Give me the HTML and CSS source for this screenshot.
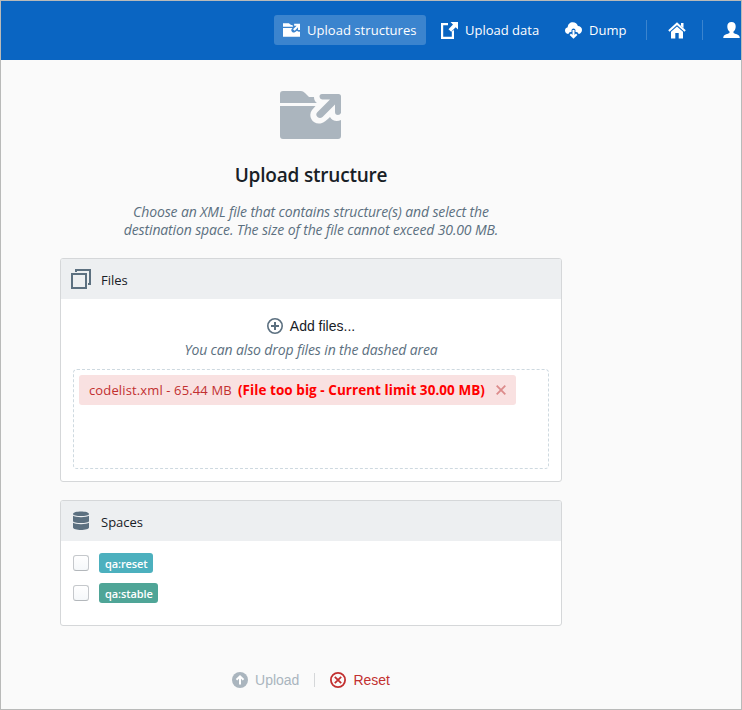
FILE: index.html
```html
<!DOCTYPE html>
<html lang="en">
<head>
<meta charset="utf-8">
<title>Upload structure</title>
<link rel="stylesheet" href="styles.css">
</head>
<body>
<div class="app">
  <header class="navbar">
    <a class="nav-item nav-structures active">
      <svg width="17" height="14" viewBox="0 0 61 48"><path class="fill" d="M0 0H21L29 6H34Q34 10 37 12H0ZM0 17H34L31 20C27 26 34 35 42 32Q45 31 50 27C52 30 57 31 61 29V48H0Z"/><path class="fill" d="M40 2H61V24H54V14L42 27L36 21L49 9H40Z"/></svg>
      <span>Upload structures</span>
    </a>
    <a class="nav-item nav-data">
      <svg width="17" height="17" viewBox="0 0 17 17"><path class="fill" d="M0 1H7V3.200H2.200V14.800H10.800V9.500L13 8V17H0ZM9.500 0H17V7.500L14.700 5.300L10.200 9.800L7.500 7.300L12 2.600Z"/></svg>
      <span>Upload data</span>
    </a>
    <a class="nav-item nav-dump">
      <svg width="17" height="17" viewBox="0 0 17 17"><path class="fill" d="M3.500 12C1.500 12 0 10.500 0 8.500C0 6.700 1.200 5.500 2.700 5.200C2.800 2.200 5 .2 7.800 .2C10.300 .2 12.300 1.700 12.900 4.100C15.300 4.100 17 5.800 17 8C17 10.300 15.300 12 13.500 12C13.300 10.500 12 9.600 10.500 10V8.500C10.500 5.700 6.500 5.700 6.500 8.500V10C5 9.600 3.700 10.500 3.500 12Z"/><path class="stroke" d="M8.500 8V15M5.300 12.200L8.500 15.300L11.700 12.200"/></svg>
      <span>Dump</span>
    </a>
    <i class="nav-divider"></i>
    <a class="nav-icon home">
      <svg width="18" height="17" viewBox="0 0 18 17"><path class="fill" d="M3 9.800L9 4.500L15 9.800V16.500H10.700V11H7.300V16.500H3Z"/><path class="roof" d="M.9 9L9 1.700L17.100 9"/><path class="fill" d="M13 1H15.500V6L13 4Z"/></svg>
    </a>
    <i class="nav-divider"></i>
    <a class="nav-icon user">
      <svg width="17" height="17" viewBox="0 0 17 17"><path class="fill" d="M8.500 0C11.200 0 12.900 1.800 12.700 4.700C12.600 7 11.700 8.600 10.500 9.500V11C12 12 16 12.300 16.500 14.500L16.800 16H.2L.5 14.500C1 12.300 5 12 6.500 11V9.500C5.300 8.600 4.400 7 4.300 4.700C4.100 1.800 5.800 0 8.500 0Z"/></svg>
    </a>
  </header>

  <main class="content">
    <svg class="hero" width="61" height="48" viewBox="0 0 61 48"><path class="fill" d="M3 0H21Q23 0 25 2L29 6H34Q34 10 37 12H0V3Q0 0 3 0ZM0 15H35.500L32 19C27 26 34 35 42 32Q45 31 50 26C52 30 57 31 61 29V45Q61 48 58 48H3Q0 48 0 45Z"/><path class="fill" d="M42 3H58.500Q61 3 61 5.500V22Q60 24 58 24Q55 24 55 21V13.500L42.500 26Q40 28 37.500 26Q35 23.500 37.500 21L50 8.500H42Q39.500 8 39.500 5.700Q39.500 3 42 3Z"/></svg>
    <h1>Upload structure</h1>
    <p class="intro">Choose an XML file that contains structure(s) and select the<br>destination space. The size of the file cannot exceed 30.00 MB.</p>

    <section class="card files">
      <h2 class="card-head">
        <svg width="20" height="20" viewBox="0 0 20 20"><path class="outline" d="M1 5H15V19H1ZM5 3V1H19V15H17"/></svg>
        <span>Files</span>
      </h2>
      <div class="card-body">
        <button class="add">
          <svg width="16" height="16" viewBox="0 0 16 16"><circle cx="8" cy="8" r="7.200"/><path d="M8 4V12M4 8H12"/></svg>
          Add files...
        </button>
        <p class="hint">You can also drop files in the dashed area</p>
        <div class="dropzone">
          <div class="file-tag">
            <span class="file-name">codelist.xml - 65.44 MB</span>
            <strong>(File too big - Current limit 30.00 MB)</strong>
            <svg width="10" height="10" viewBox="0 0 10 10"><path d="M.7 .7L9.300 9.300M9.300 .7L.7 9.300"/></svg>
          </div>
        </div>
      </div>
    </section>

    <section class="card spaces">
      <h2 class="card-head">
        <svg width="20" height="20" viewBox="0 0 20 20"><path class="fill" d="M2 3C2 -.3 18 -.3 18 3C18 5.800 2 5.800 2 3ZM2 4.800C4 6.700 16 6.700 18 4.800V10C18 12.800 2 12.800 2 10ZM2 11.800C4 13.700 16 13.700 18 11.800V16.500C18 19.800 2 19.800 2 16.500Z"/></svg>
        <span>Spaces</span>
      </h2>
      <div class="space-list">
        <label class="space"><i class="checkbox"></i><span class="tag reset-tag">qa:reset</span></label>
        <label class="space"><i class="checkbox"></i><span class="tag stable-tag">qa:stable</span></label>
      </div>
    </section>

    <footer class="actions">
      <button class="upload">
        <svg width="16" height="16" viewBox="0 0 16 16"><circle cx="8" cy="8" r="8"/><path d="M8 12.500V5M4.500 7.800L8 4.300L11.500 7.800"/></svg>
        Upload
      </button>
      <i class="action-divider"></i>
      <button class="reset">
        <svg width="16" height="16" viewBox="0 0 16 16"><circle cx="8" cy="8" r="7.100"/><path d="M4.800 4.800L11.200 11.200M11.200 4.800L4.800 11.200"/></svg>
        Reset
      </button>
    </footer>
  </main>
</div>
</body>
</html>
```
FILE: styles.css
```css
* { box-sizing: border-box; }
body {
  margin: 0;
  font: 13px/18px "Open Sans", "Noto Sans", sans-serif;
  color: #182026;
}
svg { flex: none; display: block; }
h1, h2, p { margin: 0; }
button {
  display: flex;
  align-items: center;
  gap: 7px;
  padding: 0;
  border: 0;
  background: none;
  font: 14px/18px "Liberation Sans", Arial, sans-serif;
}
.app {
  width: 742px;
  height: 710px;
  border: 1px solid #b9bab9;
  background: #fafafa;
  overflow: hidden;
}
.navbar {
  display: flex;
  align-items: center;
  height: 59px;
  padding: 0 0 1px 273px;
  background: #0a65c2;
  color: #fff;
  white-space: nowrap;
}
.nav-item {
  display: flex;
  flex: none;
  align-items: center;
  height: 30px;
  gap: 7px;
  margin-right: 6px;
  padding-left: 9px;
  border-radius: 3px;
}
.active { background: #3b84ce; }
.nav-structures { width: 152px; }
.nav-structures span { letter-spacing: .04px; }
.nav-data { width: 118px; }
.nav-dump { width: 80px; margin-right: 10px; }
.navbar .fill { fill: #fff; }
.navbar path:not(.fill) { fill: none; stroke: #fff; stroke-width: 2; }
.navbar .roof { stroke-width: 1.8; }
.nav-divider { flex: none; width: 1px; height: 20px; background: #3b84ce; }
.nav-icon { flex: none; }
.home { margin: 0 16px 0 21px; }
.user { margin-left: 20px; }
.content {
  width: 502px;
  margin-left: 59px;
  padding-top: 31px;
}
.hero { margin: 0 0 0 220px; }
.hero .fill { fill: #abb5be; }
h1 {
  margin-top: 24px;
  text-align: center;
  font-size: 19px;
  line-height: 24px;
  font-weight: 600;
  letter-spacing: -.2px;
}
.intro, .hint {
  text-align: center;
  font-size: 14px;
  font-style: italic;
  letter-spacing: -.13px;
  color: #5c7080;
}
.intro { margin-top: 16px; }
.hint { margin-top: 6px; }
.card {
  border: 1px solid #d5d7d9;
  border-radius: 3px;
  background: #fff;
}
.files { height: 224px; margin-top: 19px; }
.spaces { height: 126px; margin-top: 18px; }
.card-head {
  display: flex;
  align-items: center;
  gap: 10px;
  height: 40px;
  padding: 0 10px;
  background: #edeff1;
  border-radius: 2px 2px 0 0;
  font-size: 13px;
  font-weight: 400;
}
.card-head span { padding-top: 2px; }
.card-head .outline { fill: none; stroke: #5c7080; stroke-width: 2; }
.card-head .fill { fill: #5c7080; }
.card-body { padding: 18px 12px 0; }
.add { margin: 0 auto; color: #182026; }
.add svg { fill: none; stroke: #5c7080; stroke-width: 1.6; }
.add path { stroke-width: 2; }
.dropzone {
  height: 100px;
  margin-top: 10px;
  padding: 5px;
  border: 1px dashed #ced9e0;
  border-radius: 4px;
}
.file-tag {
  display: flex;
  align-items: center;
  width: 437px;
  height: 30px;
  padding: 0 10px;
  border-radius: 3px;
  background: #f9e1e1;
  color: #c23030;
  white-space: nowrap;
}
.file-name { width: 149px; letter-spacing: .13px; }
.file-tag strong {
  width: 258px;
  color: #f00;
  font-size: 13.5px;
  letter-spacing: .05px;
}
.file-tag svg { fill: none; stroke: #dc8b8b; stroke-width: 1.8; }
.space-list {
  display: grid;
  justify-items: start;
  gap: 10px;
  padding: 12px;
}
.space { display: flex; align-items: center; gap: 10px; height: 20px; }
.checkbox {
  width: 16px;
  height: 16px;
  border: 1px solid #c5c8cc;
  border-bottom-color: #b3b7bb;
  border-radius: 3px;
  background: linear-gradient(#fff, #f5f8fa);
}
.tag {
  height: 20px;
  padding: 2px 6px;
  border-radius: 3px;
  color: #fff;
  font-size: 11px;
  font-weight: 600;
  letter-spacing: -.1px;
}
.reset-tag { width: 54px; background: #4cb0be; }
.stable-tag { width: 59px; background: #4fa597; }
.actions {
  display: flex;
  align-items: center;
  justify-content: center;
  height: 20px;
  margin-top: 44px;
}
.upload { color: #aab5be; }
.upload svg { fill: #aab5be; }
.upload path { fill: none; stroke: #fff; stroke-width: 2; }
.action-divider { width: 1px; height: 14px; margin: 0 15px; background: #d5d7d9; }
.reset { color: #c23030; }
.reset svg { fill: none; stroke: #c23030; stroke-width: 1.8; }
```
